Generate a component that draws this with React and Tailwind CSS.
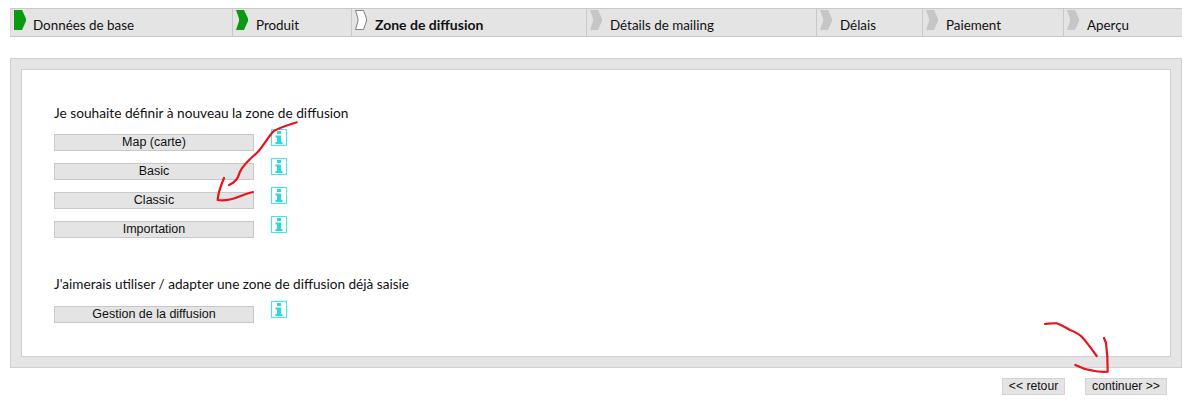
const steps = [
  { label: "Données de base", w: "w-[222px]", kind: "first" },
  { label: "Produit", w: "w-[119px]", kind: "done" },
  { label: "Zone de diffusion", w: "w-[235px]", kind: "current" },
  { label: "Détails de mailing", w: "w-[230px]", kind: "todo" },
  { label: "Délais", w: "w-[106px]", kind: "todo" },
  { label: "Paiement", w: "w-[141px]", kind: "todo" },
  { label: "Aperçu", w: "w-[119px]", kind: "todo" },
];

function Chevron({ kind }) {
  if (kind === "first")
    return (
      <svg width="14" height="20" viewBox="0 0 14 20" className="shrink-0">
        <path d="M1 0H9L13 8.5V11L9 20H1Z" fill="#0b9a12" />
      </svg>
    );
  const d = "M1 0H9L13 8.5V11L9 20H1L4 11V8.5Z";
  if (kind === "done")
    return (
      <svg width="14" height="20" viewBox="0 0 14 20" className="shrink-0">
        <path d={d} fill="#0b9a12" />
      </svg>
    );
  if (kind === "current")
    return (
      <svg width="14" height="20" viewBox="0 0 14 20" className="shrink-0">
        <path d="M1.5 .5H9.5L12.5 8.5V11L9.5 19.5H1.5L4 11V8.5Z" fill="#fff" stroke="#666" strokeWidth="0.8" />
      </svg>
    );
  return (
    <svg width="14" height="20" viewBox="0 0 14 20" className="shrink-0">
      <path d={d} fill="#c6c6c6" />
    </svg>
  );
}

function Info() {
  return (
    <svg width="16" height="17" viewBox="0 0 16 17" className="shrink-0">
      <rect x=".5" y=".5" width="15" height="16" fill="#fff" stroke="#3fe8ee" />
      <rect x="6" y="2" width="4" height="3" fill="#2ad8de" />
      <path d="M4.5 6.5H10V13H11.5V15H4.5V13H6V8.5H4.5Z" fill="#2ad8de" />
    </svg>
  );
}

function Row({ label }) {
  return (
    <div className="flex items-start h-[29px]">
      <button className="mt-[5px] w-[200px] h-[17px] bg-[#e4e4e4] border border-[#c8c8c8] text-[12.5px] leading-[15px] text-[#111] font-['Liberation_Sans',sans-serif] text-center">
        {label}
      </button>
      <div className="ml-[17px]">
        <Info />
      </div>
    </div>
  );
}

function SmallBtn({ w, children }) {
  return (
    <button className={`${w} h-[17px] bg-[#e4e4e4] border border-[#d4d4d4] text-[12.2px] leading-[15px] text-[#111] font-['Liberation_Sans',sans-serif] text-center`}>
      {children}
    </button>
  );
}

export default function App() {
  return (
    <div className="relative w-[1192px] h-[402px] overflow-hidden bg-white px-[10px] pt-[8px] font-['Lato',sans-serif] text-[#111]">
      <div className="flex h-[29px] bg-[#e4e4e4] border-y border-[#c8c8c8]">
        {steps.map((s, i) => (
          <div
            key={s.label}
            className={`${s.w} flex items-start pl-[2px] ${i > 0 ? "border-l border-[#c8c8c8]" : "border-l border-[#d8d8d8]"}`}
          >
            <div className="mt-[1px]">
              <Chevron kind={s.kind} />
            </div>
            <span
              className={`${i === 0 ? "ml-[6px]" : "ml-[7px]"} mt-[6px] leading-[20px] whitespace-nowrap ${s.kind === "current" ? "font-bold text-[14px]" : "text-[13.4px]"}`}
            >
              {s.label}
            </span>
          </div>
        ))}
      </div>

      <div className="mt-[21px] h-[310px] bg-[#e5e5e5] border border-[#cfcfcf] p-[10px]">
        <div className="h-[288px] bg-white border border-[#cfcfcf] pl-[32px] pt-[33px]">
          <p className="text-[13.7px] leading-[20px] h-[27px]">Je souhaite définir à nouveau la zone de diffusion</p>
          <div className="-mt-[1px]">
            <Row label="Map (carte)" />
            <Row label="Basic" />
            <Row label="Classic" />
            <Row label="Importation" />
          </div>
          <p className="mt-[29px] text-[13.6px] leading-[20px] h-[27px]">J'aimerais utiliser / adapter une zone de diffusion déjà saisie</p>
          <Row label="Gestion de la diffusion" />
        </div>
      </div>

      <div className="flex justify-end gap-[20px] mt-[10px] pr-[15px]">
        <SmallBtn w="w-[63px]">&lt;&lt; retour</SmallBtn>
        <SmallBtn w="w-[82px]">continuer &gt;&gt;</SmallBtn>
      </div>

      <svg width="1192" height="402" viewBox="0 0 1192 402" className="absolute top-0 left-0 pointer-events-none" fill="none" stroke="#e8141c" strokeWidth="2.2" strokeLinecap="round" strokeLinejoin="round">
        <path d="M296.7 122.3C285 126 278 128 273 131.7C266 140 262 148 256.7 153C250 159 243 165 240 171.7C238 176 238 181 229 185" />
        <path d="M224 178C221 186 218 192 217.7 200C224 201 233 199 238 197C243 195 248 193 253 192" />
        <path d="M1045 324C1050 323.5 1053 323 1056.7 323.3C1062 325 1066 328 1070 330C1075 332 1079 334 1081.7 336.7C1086 341 1091 348 1096.7 356" />
        <path d="M1104 338L1106 343L1107.3 356.7L1107.7 371.7C1100 372 1096 371.5 1093 370.7C1088 370 1083 369 1075.3 365" />
      </svg>
    </div>
  );
}
